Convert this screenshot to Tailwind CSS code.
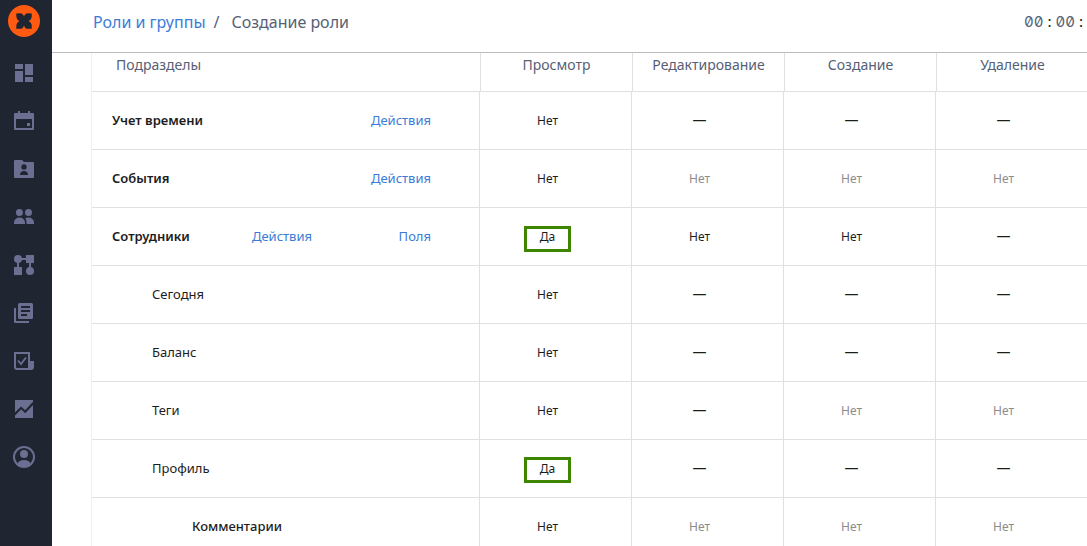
<!DOCTYPE html>
<html lang="ru">
<head>
<meta charset="utf-8">
<meta name="viewport" content="width=device-width, initial-scale=1">
<title>Создание роли</title>
<script src="https://cdn.jsdelivr.net/npm/@tailwindcss/browser@4"></script>
</head>
<body class="flex h-screen overflow-hidden bg-white font-['Noto_Sans',sans-serif] text-[#1d1d1d]">
<aside class="flex w-13 shrink-0 flex-col items-center bg-[#1f2531] pt-[5px] pr-1 text-[#6b6f91]">
  <a href="#" aria-label="Главная" class="mb-6">
    <svg class="size-8" viewBox="0 0 32 32"><circle cx="16" cy="16" r="16" fill="#ff5a12"/><path fill="#1f2531" d="M8.200 8.500L13 8.300Q15.500 9 16 11.500Q16.500 9 19 8.300L23.800 8.500L23.600 12.500Q23 15 20.500 16Q23 17 23.600 19.500L23.800 23.700L19 23.800Q16.500 23 16 20.500Q15.500 23 13 23.800L8.200 23.700L8.500 19.500Q9 17 11.500 16Q9 15 8.500 12.500Z"/></svg>
  </a>
  <nav class="flex flex-col gap-6" aria-label="Разделы">
    <a href="#" aria-label="Панель"><svg class="size-6" viewBox="0 0 24 24" fill="currentColor"><path d="M3 3h8v5H3zM3 10h8v11H3zM13 3h8v11h-8zM13 16h8v5h-8z"/></svg></a>
    <a href="#" aria-label="Календарь"><svg class="size-6" viewBox="0 0 24 24" fill="currentColor" fill-rule="evenodd"><path d="M6 2h2v2h8V2h2v2h3a1 1 0 0 1 1 1v15a1 1 0 0 1-1 1H3a1 1 0 0 1-1-1V5a1 1 0 0 1 1-1h3zM4 10v9h16v-9zM15 14h3v3h-3z"/></svg></a>
    <a href="#" aria-label="Кадры"><svg class="size-6" viewBox="0 0 24 24" fill="currentColor" fill-rule="evenodd"><path d="M3 3h7l2 2h9a1 1 0 0 1 1 1v14a1 1 0 0 1-1 1H3a1 1 0 0 1-1-1V4a1 1 0 0 1 1-1zM12 7.300a2.700 2.700 0 1 0 0 5.400a2.700 2.700 0 1 0 0-5.400zM8 18h8a4 4 0 0 0-8 0z"/></svg></a>
    <a href="#" aria-label="Сотрудники"><svg class="size-6" viewBox="0 0 24 24" fill="currentColor"><circle cx="7.400" cy="7.400" r="3.500"/><circle cx="16.500" cy="7.400" r="3.500"/><path d="M2 19v-1.500a5.500 4.900 0 0 1 11 0V19zM13.300 13.200Q15 12.500 16.500 12.600A5.500 5 0 0 1 22 17.500V19h-7.500v-1.500Q14.500 15 13.300 13.200z"/></svg></a>
    <a href="#" aria-label="Структура"><svg class="size-6" viewBox="0 0 24 24" fill="currentColor"><circle cx="6" cy="6" r="4"/><circle cx="18" cy="18" r="4"/><path d="M14 2h8v8h-8zM2 14h8v8H2zM9 5h6v2H9zM5 9h2v6H5zM17 9h2v6h-2z"/></svg></a>
    <a href="#" aria-label="Документы"><svg class="size-6" viewBox="0 0 24 24" fill="currentColor" fill-rule="evenodd"><path d="M7.500 2h12A1.500 1.500 0 0 1 21 3.500v13a1.500 1.500 0 0 1-1.500 1.500h-12A1.500 1.500 0 0 1 6 16.500v-13A1.500 1.500 0 0 1 7.500 2zM9 5v2h9V5zM9 9v2h9V9zM9 13v2h6v-2zM2 7h2v13h13v2H3.500A1.500 1.500 0 0 1 2 20.500z"/></svg></a>
    <a href="#" aria-label="Задачи"><svg class="size-6" viewBox="0 0 24 24" fill="currentColor" fill-rule="evenodd"><path d="M2 3h16v9h4v6a3 3 0 0 1-3 3H5a3 3 0 0 1-3-3zM4 5v13a1 1 0 0 0 1 1h11V5z"/><path d="M6 11.500l3 3.500 5-6.500" fill="none" stroke="currentColor" stroke-width="1.800"/></svg></a>
    <a href="#" aria-label="Отчеты"><svg class="size-6" viewBox="0 0 24 24" fill="currentColor"><path d="M3 3h18v1.800l-7.900 8.500-4-3.900L3 15.400zM21 8v13H3v-2.500l6.200-6.200 4 4z"/></svg></a>
    <a href="#" aria-label="Профиль"><svg class="size-6" viewBox="0 0 24 24" fill="currentColor"><circle cx="12" cy="12" r="10" fill="none" stroke="currentColor" stroke-width="2"/><circle cx="12" cy="9" r="4"/><path d="M5.500 18.500Q7 15 12 15T18.500 18.500Q16 22 12 22T5.500 18.500z"/></svg></a>
  </nav>
</aside>

<div class="flex min-w-0 flex-1 flex-col">
  <header class="flex h-[53px] shrink-0 items-center justify-between overflow-hidden border-b border-[#bcbcbc] pb-2 pl-[41px] text-base text-[#575f75]">
    <nav class="flex" aria-label="Навигация">
      <a href="#" class="text-[#3b7cd8]">Роли и группы</a>
      <span class="mr-3 ml-2">/</span>
      <span>Создание роли</span>
    </nav>
    <div class="flex font-['Inter',sans-serif] text-[15px] slashed-zero tabular-nums" role="timer">
      <span>00</span><span class="w-3 text-center text-[#1d1d1d]">:</span><span>00</span><span class="w-3 text-center text-[#1d1d1d]">:</span>
    </div>
  </header>

  <main class="min-h-0 flex-1 overflow-hidden pl-[39px]">
    <table class="w-[calc(100%+1px)] table-fixed border-separate border-spacing-0 border-l border-l-[#f0f0f0] text-sm">
      <colgroup><col><col class="w-38"><col class="w-38"><col class="w-38"><col class="w-38"></colgroup>
      <thead class="text-[#575f75] [&_th]:h-[39px] [&_th]:border-b [&_th]:border-[#e0e0e0] [&_th]:pt-0.5 [&_th]:align-top [&_th]:font-normal">
        <tr>
          <th scope="col" class="pl-6 text-left">Подразделы</th>
          <th scope="col" class="border-l">Просмотр</th>
          <th scope="col" class="border-l">Редактирование</th>
          <th scope="col" class="border-l">Создание</th>
          <th scope="col" class="border-l">Удаление</th>
        </tr>
      </thead>
      <tbody class="[&_a]:w-[119px] [&_a]:text-right [&_a]:font-normal [&_a]:text-[#3b7cd8] [&_button]:relative [&_button]:text-xs [&_button:disabled]:text-[#8c8c8c] [&_td]:border-r [&_td]:border-b [&_td]:border-[#e0e0e0] [&_td]:pr-4 [&_td]:pb-0.5 [&_td]:text-center [&_th]:h-[58px] [&_th]:border-r [&_th]:border-b [&_th]:border-[#e0e0e0] [&_th]:pr-12 [&_th]:text-left [&_th]:text-[13px]">
        <tr>
          <th scope="row" class="pl-5 font-semibold"><div class="flex justify-between">Учет времени <a href="#">Действия</a></div></th>
          <td><button>Нет</button></td><td>—</td><td>—</td><td>—</td>
        </tr>
        <tr>
          <th scope="row" class="pl-5 font-semibold"><div class="flex justify-between">События <a href="#">Действия</a></div></th>
          <td><button>Нет</button></td><td><button disabled>Нет</button></td><td><button disabled>Нет</button></td><td><button disabled>Нет</button></td>
        </tr>
        <tr>
          <th scope="row" class="pl-5 font-semibold"><div class="flex justify-between">Сотрудники <span class="flex"><a href="#">Действия</a><a href="#">Поля</a></span></div></th>
          <td><button>Да<span class="absolute -inset-x-4 -top-[3px] h-[26px] border-3 border-[#3f8600]"></span></button></td><td><button>Нет</button></td><td><button>Нет</button></td><td>—</td>
        </tr>
        <tr>
          <th scope="row" class="pl-15 font-normal">Сегодня</th>
          <td><button>Нет</button></td><td>—</td><td>—</td><td>—</td>
        </tr>
        <tr>
          <th scope="row" class="pl-15 font-normal">Баланс</th>
          <td><button>Нет</button></td><td>—</td><td>—</td><td>—</td>
        </tr>
        <tr>
          <th scope="row" class="pl-15 font-normal">Теги</th>
          <td><button>Нет</button></td><td>—</td><td><button disabled>Нет</button></td><td><button disabled>Нет</button></td>
        </tr>
        <tr>
          <th scope="row" class="pl-15 font-normal">Профиль</th>
          <td><button>Да<span class="absolute -inset-x-4 -top-1 h-[26px] border-3 border-[#3f8600]"></span></button></td><td>—</td><td>—</td><td>—</td>
        </tr>
        <tr>
          <th scope="row" class="pl-25 font-medium">Комментарии</th>
          <td><button>Нет</button></td><td><button disabled>Нет</button></td><td><button disabled>Нет</button></td><td><button disabled>Нет</button></td>
        </tr>
      </tbody>
    </table>
  </main>
</div>
</body>
</html>
